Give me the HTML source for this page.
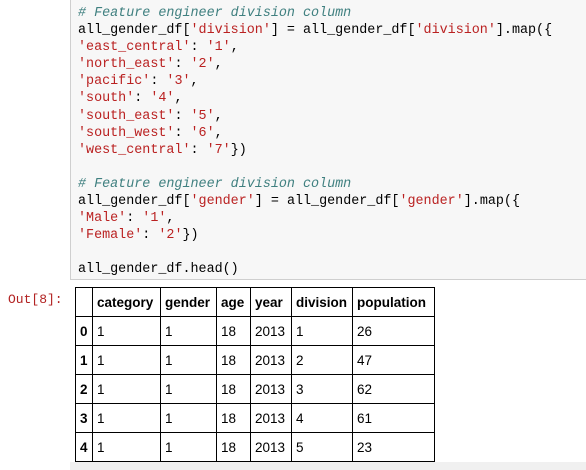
<!DOCTYPE html>
<html><head><style>
body{margin:0;width:586px;height:470px;overflow:hidden;background:#fff;position:relative;font-family:"Liberation Sans",sans-serif}
.code{position:absolute;left:70px;top:-1px;width:520px;height:281px;background:#f7f7f7;border:1px solid #cfcfcf;box-sizing:border-box}
pre{margin:0;position:absolute;left:7px;top:5px;font-family:"Liberation Mono",monospace;font-size:13.4px;line-height:17.1px;color:#000}
.s{color:#ba2121}.c{color:#408080;font-style:italic}
.out{position:absolute;left:8px;top:292px;font-family:"Liberation Mono",monospace;font-size:13px;color:#b22222}
table{position:absolute;left:75px;top:287px;border-collapse:collapse;font-size:13.5px}
td,th{border:1.5px solid #000;height:28px;padding:0 4px;text-align:left}
th{font-weight:bold}
.sb{position:absolute;left:70px;top:462px;width:516px;height:8px;background:#f0f0f0}
</style></head><body>
<div class="code"><pre><span class="c"># Feature engineer division column</span>
all_gender_df[<span class="s">'division'</span>] = all_gender_df[<span class="s">'division'</span>].map({
<span class="s">'east_central'</span>: <span class="s">'1'</span>,
<span class="s">'north_east'</span>: <span class="s">'2'</span>,
<span class="s">'pacific'</span>: <span class="s">'3'</span>,
<span class="s">'south'</span>: <span class="s">'4'</span>,
<span class="s">'south_east'</span>: <span class="s">'5'</span>,
<span class="s">'south_west'</span>: <span class="s">'6'</span>,
<span class="s">'west_central'</span>: <span class="s">'7'</span>})

<span class="c"># Feature engineer division column</span>
all_gender_df[<span class="s">'gender'</span>] = all_gender_df[<span class="s">'gender'</span>].map({
<span class="s">'Male'</span>: <span class="s">'1'</span>,
<span class="s">'Female'</span>: <span class="s">'2'</span>})

all_gender_df.head()</pre></div>
<div class="out">Out[8]:</div>
<table>
<tr><th style="width:8px"></th><th style="width:59px">category</th><th style="width:47px">gender</th><th style="width:25px">age</th><th style="width:32px">year</th><th style="width:52px">division</th><th style="width:73px">population</th></tr>
<tr><th>0</th><td>1</td><td>1</td><td>18</td><td>2013</td><td>1</td><td>26</td></tr>
<tr><th>1</th><td>1</td><td>1</td><td>18</td><td>2013</td><td>2</td><td>47</td></tr>
<tr><th>2</th><td>1</td><td>1</td><td>18</td><td>2013</td><td>3</td><td>62</td></tr>
<tr><th>3</th><td>1</td><td>1</td><td>18</td><td>2013</td><td>4</td><td>61</td></tr>
<tr><th>4</th><td>1</td><td>1</td><td>18</td><td>2013</td><td>5</td><td>23</td></tr>
</table>
<div class="sb"></div>
</body></html>
